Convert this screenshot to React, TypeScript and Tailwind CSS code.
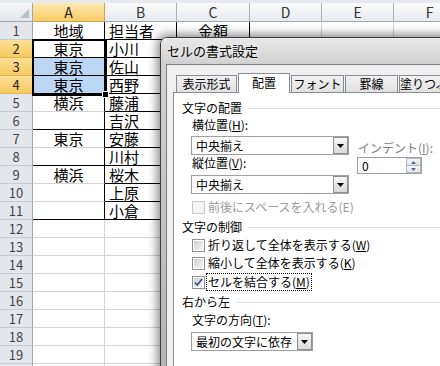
import React from 'react';

const COL_W = ['w-[72px]', 'w-[72px]', 'w-[73px]', 'w-[72px]', 'w-[72px]', 'w-[72px]'];
const LETTERS = ['A', 'B', 'C', 'D', 'E', 'F'];

const data: Record<number, string[]> = {
  1: ['地域', '担当者', '金額'],
  2: ['東京', '小川'],
  3: ['東京', '佐山'],
  4: ['東京', '西野'],
  5: ['横浜', '藤浦'],
  6: ['', '吉沢'],
  7: ['東京', '安藤'],
  8: ['', '川村'],
  9: ['横浜', '桜木'],
  10: ['', '上原'],
  11: ['', '小倉'],
};

// rows where column A has a closing black border
const aBottoms = [1, 2, 3, 4, 6, 8, 11];

function borders(r: number, c: number) {
  let right = 'border-r-[#d4d4d4]';
  let bottom = 'border-b-[#d4d4d4]';
  if (r === 1 && c <= 2) {
    right = 'border-r-black';
    bottom = 'border-b-black';
  }
  if (r >= 2 && r <= 11) {
    if (c === 0) {
      right = 'border-r-black';
      if (aBottoms.includes(r)) bottom = 'border-b-black';
    }
    if (c === 1) {
      right = 'border-r-black';
      bottom = 'border-b-black';
    }
  }
  return `border-r border-b ${right} ${bottom}`;
}

function Sheet() {
  const rows = Array.from({ length: 20 }, (_, i) => i + 1);
  return (
    <div className="relative">
      <div className="h-[3px] bg-[#e6e9ed]" />
      {/* column headers */}
      <div className="flex h-[19px]">
        <div className="relative w-[33px] shrink-0 border-r border-b border-r-[#9ea7b2] border-b-[#9ea7b2] bg-linear-to-b from-[#f4f5f7] to-[#e2e6eb]">
          <svg className="absolute right-[3px] bottom-[3px]" width="9" height="9" viewBox="0 0 9 9">
            <path d="M9 0V9H0z" fill="#b9bfc7" />
          </svg>
        </div>
        {LETTERS.map((l, i) => (
          <div
            key={l}
            className={`${COL_W[i]} shrink-0 border-r border-b text-center text-[14px] leading-[18px] ${
              i === 0
                ? 'border-r-[#c9a55a] border-b-[#c9a55a] bg-linear-to-b from-[#fde9b0] to-[#f7cb61] text-[#222]'
                : 'border-r-[#a9b0b9] border-b-[#9ea7b2] bg-linear-to-b from-[#fafafa] to-[#e7eaee] text-[#333]'
            }`}
          >
            {l}
          </div>
        ))}
      </div>
      {rows.map((r) => {
        const sel = r >= 2 && r <= 4;
        const vals = data[r] || [];
        return (
          <div key={r} className="flex h-[18px]">
            <div
              className={`w-[33px] shrink-0 border-r border-b text-center text-[13px] leading-[17px] ${
                sel
                  ? 'border-r-[#c9a55a] border-b-[#e0b659] bg-linear-to-b from-[#fcdf93] to-[#f6ca60] text-[#222]'
                  : 'border-r-[#9ea7b2] border-b-[#c3cad3] bg-[#e3e7ec] text-[#444]'
              }`}
            >
              {r}
            </div>
            {COL_W.map((w, c) => (
              <div
                key={c}
                className={`${w} shrink-0 ${borders(r, c)} text-[15px] leading-[17px] text-black ${
                  c === 1 ? 'pl-[4px] text-left' : 'text-center'
                } ${c === 0 && (r === 3 || r === 4) ? 'bg-[#bcd6f5]' : ''}`}
              >
                {vals[c] || ''}
              </div>
            ))}
          </div>
        );
      })}
      {/* selection A2:A4 */}
      <div className="absolute top-[39px] left-[32px] h-[57px] w-[75px] border-2 border-black" />
      <div className="absolute top-[91px] left-[102px] h-[7px] w-[7px] border border-white bg-black" />
    </div>
  );
}

function GroupLabel({ text, className = '' }: { text: string; className?: string }) {
  return (
    <div className={`flex h-[16px] items-center ${className}`}>
      <span>{text}</span>
      <div className="ml-[6px] h-px flex-1 bg-[#d5dfe5]" />
    </div>
  );
}

function Arrow() {
  return (
    <svg width="7" height="4" viewBox="0 0 7 4">
      <path d="M0 0h7L3.5 4z" fill="#000" />
    </svg>
  );
}

function Combo({ value, width }: { value: string; width: string }) {
  return (
    <div className={`flex h-[19px] ${width} border border-[#9c9fa4] bg-white`}>
      <span className="flex-1 pl-[4px] leading-[17px]">{value}</span>
      <div className="flex w-[15px] items-center justify-center border border-[#8d9095] bg-linear-to-b from-[#f6f6f6] to-[#d9d9d9]">
        <Arrow />
      </div>
    </div>
  );
}

function Check({ checked = false, disabled = false }: { checked?: boolean; disabled?: boolean }) {
  return (
    <div
      className={`flex h-[13px] w-[13px] shrink-0 items-center justify-center border ${
        disabled ? 'border-[#c9c9c9] bg-[#f4f4f4]' : 'border-[#8e8f8f] bg-white'
      }`}
    >
      <div
        className={`flex h-[9px] w-[9px] items-center justify-center ${
          disabled ? 'bg-[#f4f4f4]' : 'bg-linear-to-br from-[#cfd1d4] to-[#f7f7f7]'
        }`}
      >
        {checked && (
          <svg width="9" height="9" viewBox="0 0 9 9">
            <path d="M1 4.5L3.3 7L8 1" stroke="#36508e" strokeWidth="1.7" fill="none" />
          </svg>
        )}
      </div>
    </div>
  );
}

function CheckRow({
  children,
  checked,
  disabled,
  focus,
  className = '',
}: {
  children: React.ReactNode;
  checked?: boolean;
  disabled?: boolean;
  focus?: boolean;
  className?: string;
}) {
  return (
    <div className={`flex items-center pl-[10px] ${focus ? 'h-[18px]' : 'h-[16px]'} ${className}`}>
      <Check checked={checked} disabled={disabled} />
      <span
        className={`${focus ? 'ml-[1px] border border-dotted border-black px-[1px] leading-[16px]' : 'ml-[3px]'} ${
          disabled ? 'text-[#9a9a9a]' : 'text-black'
        }`}
      >
        {children}
      </span>
    </div>
  );
}

function Tab({ label, width, active }: { label: string; width: string; active?: boolean }) {
  return active ? (
    <div
      className={`relative z-10 -mb-px ml-px h-[20px] ${width} border border-b-0 border-[#898c95] bg-white text-center leading-[18px]`}
    >
      {label}
    </div>
  ) : (
    <div
      className={`ml-px h-[17px] ${width} shrink-0 overflow-hidden whitespace-nowrap border border-b-0 border-[#898c95] bg-linear-to-b from-[#f2f2f2] to-[#e1e1e1] text-center leading-[15px]`}
    >
      {label}
    </div>
  );
}

function Dialog() {
  return (
    <div className="absolute top-[37px] left-[160px] h-[340px] w-[300px] rounded-t-[7px] border border-[#3f3f3f] bg-linear-to-b from-[#d4d4d4] to-[#b4b4b4] shadow-[0_0_10px_3px_rgba(0,0,0,0.45)]">
      <div className="h-[26px] rounded-t-[6px] bg-linear-to-b from-[#e9e9e9] to-[#cfcfcf] pl-[6px] text-[13px] leading-[26px] text-black [text-shadow:0_0_6px_#fff]">
        セルの書式設定
      </div>
      <div className="ml-[5px] h-full border-t border-l border-[#7d7d7d] bg-[#f0f0f0] pt-[8px] pl-[6px] text-[12px] text-black">
        <div className="flex h-[19px] items-end pl-[2px]">
          <Tab label="表示形式" width="w-[61px]" />
          <Tab label="配置" width="w-[58px]" active />
          <Tab label="フォント" width="w-[53px]" />
          <Tab label="罫線" width="w-[53px]" />
          <Tab label="塗りつぶし" width="w-[60px]" />
        </div>
        <div className="h-[300px] border border-[#898c95] bg-white pt-[7px] pl-[8px] leading-[16px]">
          <GroupLabel text="文字の配置" />
          <div className="mt-[1px] flex">
            <div className="ml-[9px]">
              <div className="h-[16px] pl-[1px]">
                横位置(<u>H</u>):
              </div>
              <div className="mt-[3px]">
                <Combo value="中央揃え" width="w-[158px]" />
              </div>
              <div className="h-[16px] pl-[1px]">
                縦位置(<u>V</u>):
              </div>
              <div className="mt-[4px]">
                <Combo value="中央揃え" width="w-[158px]" />
              </div>
            </div>
            <div className="ml-[8px] pt-[23px]">
              <div className="h-[16px] pl-[1px] text-[#7d7d7d]">
                インデント(<u>I</u>):
              </div>
              <div className="mt-[1px] flex h-[17px] w-[65px] border border-[#9c9fa4] bg-white">
                <span className="flex-1 pl-[4px] leading-[15px]">0</span>
                <div className="flex w-[15px] flex-col">
                  <div className="flex flex-1 items-center justify-center border border-[#b3b8bf] bg-linear-to-b from-[#f7f9fb] to-[#dde3ea]">
                    <svg width="5" height="3" viewBox="0 0 5 3">
                      <path d="M0 3h5L2.5 0z" fill="#4f6d9c" />
                    </svg>
                  </div>
                  <div className="flex flex-1 items-center justify-center border border-t-0 border-[#b3b8bf] bg-linear-to-b from-[#f7f9fb] to-[#dde3ea]">
                    <svg width="5" height="3" viewBox="0 0 5 3">
                      <path d="M0 0h5L2.5 3z" fill="#4f6d9c" />
                    </svg>
                  </div>
                </div>
              </div>
            </div>
          </div>
          <CheckRow disabled className="mt-[5px]">
            前後にスペースを入れる(E)
          </CheckRow>
          <GroupLabel text="文字の制御" className="mt-[4px]" />
          <CheckRow className="mt-[2px]">
            折り返して全体を表示する(<u>W</u>)
          </CheckRow>
          <CheckRow className="mt-[2px]">
            縮小して全体を表示する(<u>K</u>)
          </CheckRow>
          <CheckRow checked focus className="mt-[2px]">
            セルを結合する(<u>M</u>)
          </CheckRow>
          <GroupLabel text="右から左" className="mt-[3px]" />
          <div className="mt-[2px] h-[16px] pl-[10px]">
            文字の方向(<u>T</u>):
          </div>
          <div className="mt-[4px] ml-[9px]">
            <Combo value="最初の文字に依存" width="w-[122px]" />
          </div>
        </div>
      </div>
    </div>
  );
}

export default function App() {
  return (
    <div className="relative h-[366px] w-[440px] overflow-hidden bg-white font-['Noto_Sans_CJK_JP',sans-serif]">
      <Sheet />
      <Dialog />
    </div>
  );
}
